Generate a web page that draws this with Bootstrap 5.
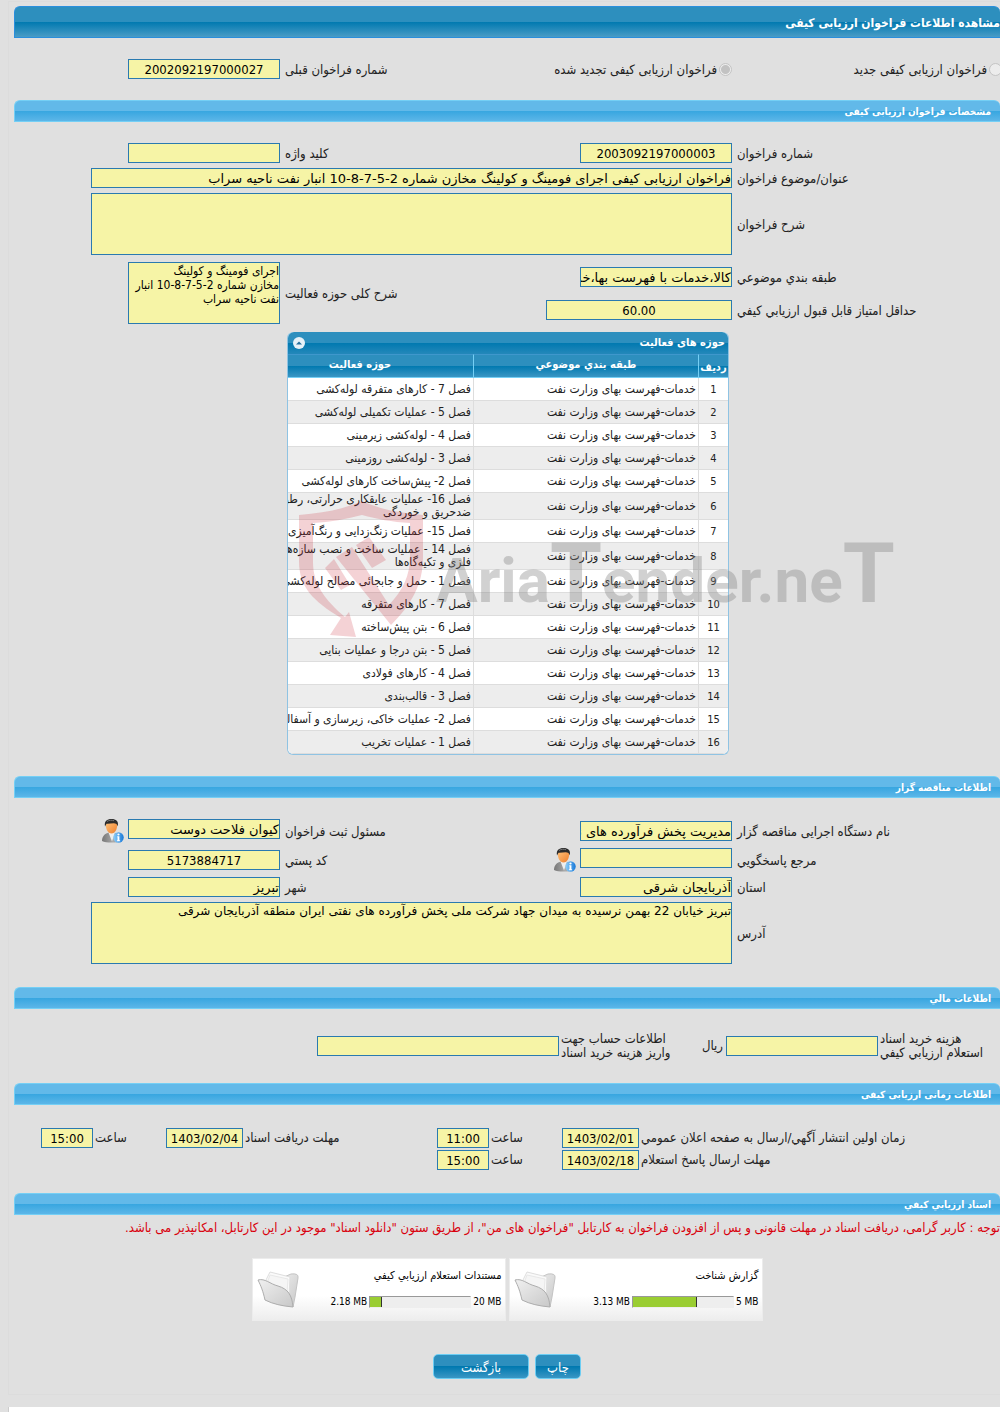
<!DOCTYPE html>
<html lang="fa" dir="rtl">
<head>
<meta charset="utf-8">
<meta name="viewport" content="width=device-width, initial-scale=1">
<title>مشاهده اطلاعات فراخوان ارزیابی کیفی</title>
<link href="https://cdn.jsdelivr.net/npm/bootstrap@5.3.0/dist/css/bootstrap.min.css" rel="stylesheet">
<style>
  body { background:#fff; color:#222; font-family:"DejaVu Sans Condensed","DejaVu Sans",sans-serif; font-size:13px; line-height:14px; overflow-x:hidden; }
  .page-shell { background:#e0e0e0; padding:1px 0 12px 8px; }
  .page-frame { border:1px solid #dcdcdc; border-right:0; padding:4px 0 15px 5px; }
  .title-bar { height:32px; border:1px solid #2a8fdd; border-right:0; border-radius:6px 6px 0 0; background:linear-gradient(#2d8fbe 0 50%,#0079b0 50%,#4a9cc6); color:#fff; font-size:12px; font-weight:bold; line-height:32px; margin:0; }
  .sec-bar { height:22px; border:1px solid #74cff5; border-right:0; border-radius:6px 6px 0 0; background:linear-gradient(#62b9e9 0 50%,#37a6e0 50%,#5cb6e8); color:#fff; font-size:10px; font-weight:bold; line-height:21px; padding-right:9px; margin:0; }
  .line { display:grid; grid-template-columns:268px 152px minmax(0,1fr) 152px 37px 77px; align-items:center; }
  .stack { display:flex; flex-direction:column; gap:5px; }
  .pad-form { padding-top:21px; }
  .pad-kind { padding-block:21px; }
  .pad-org { padding-block:21px 23px; }
  .pad-small { padding-block:23px; }
  .line label { text-align:left; padding-left:5px; padding-top:2px; }
  .fld { display:block; width:100%; height:20px; border:1px solid #2a7ab0; border-radius:0; background:#f6f4a6; color:#000; font-family:"DejaVu Sans",sans-serif; font-size:13px; line-height:18px; padding:0; outline:0; }
  .fld.text-center, #scope { font-family:"DejaVu Sans Condensed","DejaVu Sans",sans-serif; }
  textarea.fld { height:62px; font-size:12px; line-height:14px; padding:1px 0; resize:none; overflow:hidden; }
  .wide { grid-column:2 / 6; }
  .score { width:186px; }
  .two-rows { grid-template-rows:30px 28px; row-gap:4px; margin-top:7px; }
  .tall { grid-row:1 / 3; }
  .low-label { grid-area:2 / 1; }
  .low-field { grid-area:2 / 2; }
  .pick { gap:2px; }
  .pick label { padding-left:0; }
  .pick input { appearance:none; width:13px; height:13px; margin:0; border:1px solid #c4c4c4; border-radius:50%; background:#ececec; flex:none; }
  .pick input:checked { background:radial-gradient(circle,#c2c2c2 0 4px,#ececec 5px); }
  .edge { margin-right:-2px; }
  .user-btn { border:0; background:none; padding:0; width:22px; height:24px; display:block; margin-right:4px; }
  .sheet { position:relative; margin:8px 271px 0 0; width:442px; border:1px solid #8fc3e3; border-top:0; border-radius:6px; background:#fff; }
  .sheet-head { height:22px; border-radius:6px 6px 0 0; background:linear-gradient(#2d8fbe 0 50%,#0079b0 50%,#2488ba); color:#fff; padding:0 3px 0 4px; }
  .sheet-head h2 { font-size:11px; line-height:22px; font-weight:bold; margin:0; }
  .fold-btn { border:0; padding:0; background:none; width:14px; height:14px; display:block; }
  .clip-box { overflow:hidden; border-radius:0 0 6px 6px; }
  .grid-table { width:481px; table-layout:fixed; border-collapse:separate; border-spacing:0; font-size:12px; line-height:13px; }
  .grid-table th { height:24px; font-size:11px; text-align:center; color:#fff; padding:0 0 3px; border-top:1px solid #3f97cc; border-bottom:1px solid #74cff5; background:linear-gradient(#2d8fbe 0 50%,#0079b0 50%,#3a96c4); border-left:1px solid #74cff5; }
  .grid-table th:first-child { padding:2px 0 0; }
  .grid-table td { height:23px; padding:0 2px; border-bottom:1px solid #ddd; border-left:1px solid #ddd; white-space:nowrap; overflow:hidden; }
  .grid-table th:last-child, .grid-table td:last-child { border-left:0; }
  .grid-table tbody tr:nth-child(even) td { background:#ededed; }
  .grid-table td:first-child { text-align:center; font-size:11px; }
  .grid-table .two td { height:27px; }
  .water { position:absolute; left:11px; top:167px; width:604px; height:144px; pointer-events:none; direction:ltr; }
  .money { display:grid; grid-template-columns:122px 152px 167px 242px; align-items:center; }
  .unit { padding-right:3px; }
  .times { display:grid; grid-template-columns:minmax(0,1fr) 77px 73px 52px 194px 77px 73px 52px 27px; align-items:center; row-gap:2px; }
  .times label, .money label { text-align:left; padding-left:2px; }
  .row-two { grid-column:1; }
  .warn { color:#d9000d; font-size:13px; line-height:26px; margin:0; white-space:nowrap; }
  .docs { gap:3px; margin-top:17px; }
  .doc { width:254px; height:63px; border:1px solid #ececec; background:linear-gradient(#fff 60%,#ededed); color:#000; font-size:10px; padding:0 3px 0 4px; }
  .doc-info { padding-top:10px; gap:12px; }
  .doc-name { font-size:11px; }
  .meter-line { gap:2px; }
  .meter { width:102px; height:12px; border:1px solid #999; border-right-color:#eee; border-bottom-color:#eee; background:#eee; direction:ltr; }
  .meter-fill { height:10px; background:#9acd32; border-right:1px solid #333; }
  .acts { gap:6px; margin-top:33px; }
  .act { height:25px; border:1px solid #6ccdf3; border-radius:5px; background:linear-gradient(#2d8fbe 0 50%,#0079b0 50%,#3a96c4); color:#fff; font-size:13px; line-height:20px; padding:2px 0 0; width:46px; }
  .act-back { width:96px; }
  .foot { height:5px; background:#fff; border-left:1px solid #ccc; margin-left:8px; }
  .foot-wrap { background:#e0e0e0; }
</style>
</head>
<body>
<svg width="0" height="0" class="position-absolute" aria-hidden="true">
  <defs>
    <linearGradient id="suit" x1="0" x2="1"><stop offset="0" stop-color="#777"/><stop offset=".6" stop-color="#aaa"/><stop offset="1" stop-color="#888"/></linearGradient>
    <linearGradient id="skin" x1="0" x2="1" y2="1"><stop offset="0" stop-color="#ffc27a"/><stop offset="1" stop-color="#ee7f2c"/></linearGradient>
    <linearGradient id="info" x1="0" x2="1"><stop offset="0" stop-color="#8fd0fa"/><stop offset="1" stop-color="#1878d8"/></linearGradient>
    <linearGradient id="fold" x1="0" x2="1" y2="1"><stop offset="0" stop-color="#f0f0f0"/><stop offset="1" stop-color="#c8c8c8"/></linearGradient>
  </defs>
  <symbol id="user" viewBox="0 0 22 24">
    <path d="M0 22c0-5 3-7.500 7-8.500h5c4 1 7 4 7 8.500-4 2-15 2-19 0z" fill="url(#suit)"/>
    <path d="M6.500 13.500l3.500 9 3-9z" fill="#eee"/>
    <path d="M3.800 6c0-4 11.400-4 11.400 0 0 4-2 8.500-5.700 8.500S3.800 10 3.800 6z" fill="url(#skin)"/>
    <path d="M3 7.500C2 2 5 0 9.500 0s7.500 2 6.200 7.200L14.500 5C12 3.500 7.500 5.200 4.500 4.800z" fill="#2b2b2b"/>
    <path d="M5 2.500c2-1.500 5-1.500 7-.8" stroke="#777" fill="none"/>
    <circle cx="16.500" cy="18.500" r="5.200" fill="url(#info)"/>
    <circle cx="16.500" cy="15.500" r="1.100" fill="#fff"/><path d="M15.200 17.300h2.200v4h.7v.9h-3.200v-.9h.6v-3.100h-.3z" fill="#fff"/>
  </symbol>
  <symbol id="folder" viewBox="0 0 42 37">
    <path d="M20 9L34 3q8-1 7 4l-3 19-2 10z" fill="url(#fold)" stroke="#c4c4c4"/>
    <path d="M8 11l5-10 20 5-1 20z" fill="#fafafa" stroke="#dedede"/>
    <path d="M10 12l3-8 18 4-1 14z" fill="#f5f5f5" stroke="#e8e8e8"/>
    <path d="M1 9c7-2 12 4 20 6 10 3 14 9 15 21-11-1-20-3-28-7C6 20 4 15 1 9z" fill="url(#fold)" stroke="#adadad"/>
  </symbol>
</svg>

<div class="page-shell">
<main class="page-frame">
  <h1 class="title-bar">مشاهده اطلاعات فراخوان ارزیابی کیفی</h1>

  <div class="line pad-kind">
    <div class="d-flex align-items-center pick edge"><input type="radio" name="kind" id="kNew" disabled><label for="kNew">فراخوان ارزیابی کیفی جدید</label></div>
    <div class="d-flex align-items-center pick text-nowrap"><input type="radio" name="kind" id="kRe" checked disabled><label for="kRe">فراخوان ارزیابی کیفی تجدید شده</label></div>
    <label for="prev">شماره فراخوان قبلی</label>
    <input class="fld text-center" id="prev" value="2002092197000027" readonly>
  </div>

  <h2 class="sec-bar">مشخصات فراخوان ارزیابی کیفی</h2>
  <section class="stack pad-form">
    <div class="line">
      <label for="num">شماره فراخوان</label><input class="fld text-center" id="num" value="2003092197000003" readonly>
      <label for="key">کلید واژه</label><input class="fld" id="key" readonly>
    </div>
    <div class="line"><label for="subj">عنوان/موضوع فراخوان</label><input class="fld wide" id="subj" value="فراخوان ارزیابی کیفی اجرای فومینگ و کولینگ مخازن شماره 2-5-7-8-10 انبار نفت ناحیه سراب" readonly></div>
    <div class="line"><label for="desc">شرح فراخوان</label><textarea class="fld wide" id="desc" readonly></textarea></div>
  </section>
  <div class="line two-rows">
    <label for="cat">طبقه بندي موضوعي</label><input class="fld" id="cat" value="کالا،خدمات با فهرست بها،خدمات" readonly>
    <label class="tall" for="scope">شرح کلی حوزه فعالیت</label><textarea class="fld tall" id="scope" readonly>اجرای فومینگ و کولینگ
مخازن شماره 2-5-7-8-10 انبار
نفت ناحیه سراب</textarea>
    <label class="low-label" for="score">حداقل امتیاز قابل قبول ارزیابي کیفي</label><input class="fld score text-center low-field" id="score" value="60.00" readonly>
  </div>

  <div class="sheet">
    <div class="sheet-head d-flex justify-content-between align-items-center">
      <h2>حوزه های فعالیت</h2>
      <button class="fold-btn" type="button" aria-label="بستن"><svg class="d-block" width="14" height="14" viewBox="0 0 14 14"><circle cx="7" cy="7" r="6" fill="#e6f1f8"/><path d="M4 8.500l3-3 3 3z" fill="#246f9c"/></svg></button>
    </div>
    <div class="clip-box">
    <table class="grid-table">
      <colgroup><col style="width:30px"><col style="width:225px"><col></colgroup>
      <thead><tr><th>ردیف</th><th>طبقه بندي موضوعي</th><th>حوزه فعالیت</th></tr></thead>
      <tbody>
        <tr><td>1</td><td>خدمات-فهرست بهای وزارت نفت</td><td>فصل 7 - کارهای متفرقه لوله‌کشی</td></tr>
        <tr><td>2</td><td>خدمات-فهرست بهای وزارت نفت</td><td>فصل 5 - عملیات تکمیلی لوله‌کشی</td></tr>
        <tr><td>3</td><td>خدمات-فهرست بهای وزارت نفت</td><td>فصل 4 - لوله‌کشی زیرمینی</td></tr>
        <tr><td>4</td><td>خدمات-فهرست بهای وزارت نفت</td><td>فصل 3 - لوله‌کشی روزمینی</td></tr>
        <tr><td>5</td><td>خدمات-فهرست بهای وزارت نفت</td><td>فصل 2- پیش‌ساخت کارهای لوله‌کشی</td></tr>
        <tr class="two"><td>6</td><td>خدمات-فهرست بهای وزارت نفت</td><td>فصل 16- عملیات عایقکاری حرارتی، رطوبتی،<br>ضدحریق و خوردگی</td></tr>
        <tr><td>7</td><td>خدمات-فهرست بهای وزارت نفت</td><td>فصل 15- عملیات زنگ‌زدایی و رنگ‌آمیزی</td></tr>
        <tr class="two"><td>8</td><td>خدمات-فهرست بهای وزارت نفت</td><td>فصل 14 - عملیات ساخت و نصب سازه‌های<br>فلزی و تکیه‌گاه‌ها</td></tr>
        <tr><td>9</td><td>خدمات-فهرست بهای وزارت نفت</td><td>فصل 1 - حمل و جابجائی مصالح لوله‌کشی</td></tr>
        <tr><td>10</td><td>خدمات-فهرست بهای وزارت نفت</td><td>فصل 7 - کارهای متفرقه</td></tr>
        <tr><td>11</td><td>خدمات-فهرست بهای وزارت نفت</td><td>فصل 6 - بتن پیش‌ساخته</td></tr>
        <tr><td>12</td><td>خدمات-فهرست بهای وزارت نفت</td><td>فصل 5 - بتن درجا و عملیات بنایی</td></tr>
        <tr><td>13</td><td>خدمات-فهرست بهای وزارت نفت</td><td>فصل 4 - کارهای فولادی</td></tr>
        <tr><td>14</td><td>خدمات-فهرست بهای وزارت نفت</td><td>فصل 3 - قالب‌بندی</td></tr>
        <tr><td>15</td><td>خدمات-فهرست بهای وزارت نفت</td><td>فصل 2- عملیات خاکی، زیرسازی و آسفالت</td></tr>
        <tr><td>16</td><td>خدمات-فهرست بهای وزارت نفت</td><td>فصل 1 - عملیات تخریب</td></tr>
      </tbody>
    </table>
    </div>
    <svg class="water" viewBox="0 0 604 144" aria-hidden="true">
      <g fill="#c8202c" fill-opacity=".2">
        <path d="M0 16C25 14 45 10 63 2 80 10 100 14 124 16v42c0 28-12 48-32 68L37 58l16-10 37 58c14-15 21-30 21-48V24C93 23 78 20 63 16 48 20 31 23 14 24v39c0 22 12 38 32 55l4-5 7 25-26-2 11-17C14 102 0 88 0 62z"/>
        <path d="M26 69l9-9 16 26-9 5zM57 46l13-8 17 23-14 8z"/>
      </g>
      <text x="137" y="103" font-family="Roboto,sans-serif" font-weight="bold" font-size="62" fill="#808080" fill-opacity=".36">Aria<tspan font-size="84">T</tspan>ender.ne<tspan font-size="84">T</tspan></text>
    </svg>
  </div>

  <h2 class="sec-bar" style="margin-top:21px">اطلاعات مناقصه گزار</h2>
  <section class="stack pad-org">
    <div class="line">
      <label for="org">نام دستگاه اجرایی مناقصه گزار</label><input class="fld" id="org" value="مدیریت پخش فرآورده های نفتی" readonly>
      <label for="resp">مسئول ثبت فراخوان</label><input class="fld align-self-start" id="resp" value="کیوان فلاحت دوست" readonly>
      <button class="user-btn" type="button" aria-label="مشخصات"><svg class="d-block" width="22" height="24"><use href="#user"/></svg></button>
    </div>
    <div class="line">
      <label for="ref">مرجع پاسخگويي</label><input class="fld align-self-start" id="ref" readonly>
      <div class="d-flex align-items-center justify-content-between"><button class="user-btn" type="button" aria-label="مشخصات"><svg class="d-block" width="22" height="24"><use href="#user"/></svg></button><label for="zip">کد پستي</label></div>
      <input class="fld text-center" id="zip" value="5173884717" readonly>
    </div>
    <div class="line">
      <label for="prov">استان</label><input class="fld" id="prov" value="آذربایجان شرقی" readonly>
      <label for="city">شهر</label><input class="fld" id="city" value="تبریز" readonly>
    </div>
    <div class="line"><label for="addr">آدرس</label><textarea class="fld wide" id="addr" readonly>تبریز خیابان 22 بهمن نرسیده به میدان جهاد شرکت ملی پخش فرآورده های نفتی ایران منطقه آذربایجان شرقی</textarea></div>
  </section>

  <h2 class="sec-bar">اطلاعات مالي</h2>
  <section class="money pad-small">
    <label for="cost">هزینه خرید اسناد<br>استعلام ارزیابي کیفي</label><input class="fld" id="cost" readonly>
    <div class="d-flex align-items-center justify-content-between"><span class="unit">ریال</span><label for="acc">اطلاعات حساب جهت<br>واریز هزینه خرید اسناد</label></div>
    <input class="fld" id="acc" readonly>
  </section>

  <h2 class="sec-bar">اطلاعات زمانی ارزیابی کیفی</h2>
  <section class="times pad-small">
    <label for="d1">زمان اولین انتشار آگهي/ارسال به صفحه اعلان عمومي</label><input class="fld text-center" id="d1" value="1403/02/01" readonly>
    <label for="t1">ساعت</label><input class="fld text-center" id="t1" value="11:00" readonly>
    <label for="d2">مهلت دریافت اسناد</label><input class="fld text-center" id="d2" value="1403/02/04" readonly>
    <label for="t2">ساعت</label><input class="fld text-center" id="t2" value="15:00" readonly>
    <label class="row-two" for="d3">مهلت ارسال پاسخ استعلام</label><input class="fld text-center" id="d3" value="1403/02/18" readonly>
    <label for="t3">ساعت</label><input class="fld text-center" id="t3" value="15:00" readonly>
  </section>

  <h2 class="sec-bar">اسناد ارزیابي کیفي</h2>
  <p class="warn">توجه : کاربر گرامی، دریافت اسناد در مهلت قانونی و پس از افزودن فراخوان به کارتابل "فراخوان های من"، از طریق ستون "دانلود اسناد" موجود در این کارتابل، امکانپذیر می باشد.</p>
  <div class="d-flex justify-content-center docs">
    <div class="doc d-flex align-items-center justify-content-between">
      <div class="doc-info d-flex flex-column align-self-start"><span class="doc-name">گزارش شناخت</span>
        <div class="d-flex align-items-center meter-line"><bdi>5 MB</bdi><div class="meter"><div class="meter-fill" style="width:64%"></div></div><bdi>3.13 MB</bdi></div></div>
      <svg width="42" height="37" aria-hidden="true"><use href="#folder"/></svg>
    </div>
    <div class="doc d-flex align-items-center justify-content-between">
      <div class="doc-info d-flex flex-column align-self-start"><span class="doc-name">مستندات استعلام ارزیابي کیفي</span>
        <div class="d-flex align-items-center meter-line"><bdi>20 MB</bdi><div class="meter"><div class="meter-fill" style="width:12%"></div></div><bdi>2.18 MB</bdi></div></div>
      <svg width="42" height="37" aria-hidden="true"><use href="#folder"/></svg>
    </div>
  </div>
  <div class="d-flex justify-content-center acts">
    <button class="act" type="button">چاپ</button>
    <button class="act act-back" type="button">بازگشت</button>
  </div>
</main>
</div>
<div class="foot-wrap"><div class="foot"></div></div>
<script src="https://cdn.jsdelivr.net/npm/bootstrap@5.3.0/dist/js/bootstrap.bundle.min.js"></script>
</body>
</html>
